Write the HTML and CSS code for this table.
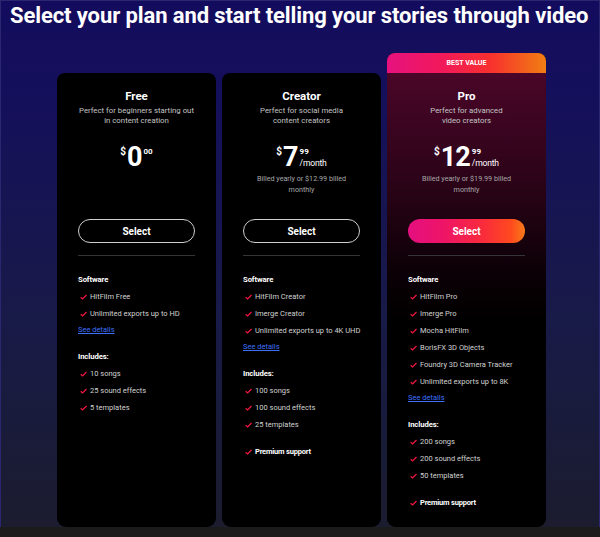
FILE: index.html
```html
<!DOCTYPE html>
<html>
<head>
<meta charset="utf-8">
<link rel="stylesheet" href="styles.css">
</head>
<body>
<div class="page">
  <section class="hero">
    <h1 class="title">Select your plan and start telling your stories through video</h1>
    <div class="plans">
      <div class="card">
        <div class="top">
          <div class="name">Free</div>
          <div class="desc">Perfect for beginners starting out<br>in content creation</div>
          <div class="price">
            <span class="cur">$</span><span class="big">0</span><span class="side"><span class="cents">00</span></span>
          </div>
        </div>
        <button class="btn">Select</button>
        <div class="divider"></div>
        <div class="feats">
          <div class="fh">Software</div>
          <div class="item"><svg class="chk" viewBox="0 0 8 6"><path d="M0.8 3.2 L3 5.2 L7.4 0.8"/></svg>HitFilm Free</div>
          <div class="item"><svg class="chk" viewBox="0 0 8 6"><path d="M0.8 3.2 L3 5.2 L7.4 0.8"/></svg>Unlimited exports up to HD</div>
          <a class="see" href="#">See details</a>
          <div class="fh gap">Includes:</div>
          <div class="item"><svg class="chk" viewBox="0 0 8 6"><path d="M0.8 3.2 L3 5.2 L7.4 0.8"/></svg>10 songs</div>
          <div class="item"><svg class="chk" viewBox="0 0 8 6"><path d="M0.8 3.2 L3 5.2 L7.4 0.8"/></svg>25 sound effects</div>
          <div class="item"><svg class="chk" viewBox="0 0 8 6"><path d="M0.8 3.2 L3 5.2 L7.4 0.8"/></svg>5 templates</div>
        </div>
      </div>

      <div class="card">
        <div class="top">
          <div class="name">Creator</div>
          <div class="desc">Perfect for social media<br>content creators</div>
          <div class="price">
            <span class="cur">$</span><span class="big">7</span><span class="side"><span class="cents">99</span><span class="per">/month</span></span>
          </div>
          <div class="billed">Billed yearly or $12.99 billed<br>monthly</div>
        </div>
        <button class="btn">Select</button>
        <div class="divider"></div>
        <div class="feats">
          <div class="fh">Software</div>
          <div class="item"><svg class="chk" viewBox="0 0 8 6"><path d="M0.8 3.2 L3 5.2 L7.4 0.8"/></svg>HitFilm Creator</div>
          <div class="item"><svg class="chk" viewBox="0 0 8 6"><path d="M0.8 3.2 L3 5.2 L7.4 0.8"/></svg>Imerge Creator</div>
          <div class="item"><svg class="chk" viewBox="0 0 8 6"><path d="M0.8 3.2 L3 5.2 L7.4 0.8"/></svg>Unlimited exports up to 4K UHD</div>
          <a class="see" href="#">See details</a>
          <div class="fh gap">Includes:</div>
          <div class="item"><svg class="chk" viewBox="0 0 8 6"><path d="M0.8 3.2 L3 5.2 L7.4 0.8"/></svg>100 songs</div>
          <div class="item"><svg class="chk" viewBox="0 0 8 6"><path d="M0.8 3.2 L3 5.2 L7.4 0.8"/></svg>100 sound effects</div>
          <div class="item"><svg class="chk" viewBox="0 0 8 6"><path d="M0.8 3.2 L3 5.2 L7.4 0.8"/></svg>25 templates</div>
          <div class="item strong gap"><svg class="chk" viewBox="0 0 8 6"><path d="M0.8 3.2 L3 5.2 L7.4 0.8"/></svg>Premium support</div>
        </div>
      </div>

      <div class="card pro">
        <div class="badge">BEST VALUE</div>
        <div class="pro-body">
          <div class="top">
            <div class="name">Pro</div>
            <div class="desc">Perfect for advanced<br>video creators</div>
            <div class="price">
              <span class="cur">$</span><span class="big">12</span><span class="side"><span class="cents">99</span><span class="per">/month</span></span>
            </div>
            <div class="billed">Billed yearly or $19.99 billed<br>monthly</div>
          </div>
          <button class="btn btn-grad">Select</button>
          <div class="divider"></div>
          <div class="feats">
            <div class="fh">Software</div>
            <div class="item"><svg class="chk" viewBox="0 0 8 6"><path d="M0.8 3.2 L3 5.2 L7.4 0.8"/></svg>HitFilm Pro</div>
            <div class="item"><svg class="chk" viewBox="0 0 8 6"><path d="M0.8 3.2 L3 5.2 L7.4 0.8"/></svg>Imerge Pro</div>
            <div class="item"><svg class="chk" viewBox="0 0 8 6"><path d="M0.8 3.2 L3 5.2 L7.4 0.8"/></svg>Mocha HitFilm</div>
            <div class="item"><svg class="chk" viewBox="0 0 8 6"><path d="M0.8 3.2 L3 5.2 L7.4 0.8"/></svg>BorisFX 3D Objects</div>
            <div class="item"><svg class="chk" viewBox="0 0 8 6"><path d="M0.8 3.2 L3 5.2 L7.4 0.8"/></svg>Foundry 3D Camera Tracker</div>
            <div class="item"><svg class="chk" viewBox="0 0 8 6"><path d="M0.8 3.2 L3 5.2 L7.4 0.8"/></svg>Unlimited exports up to 8K</div>
            <a class="see" href="#">See details</a>
            <div class="fh gap">Includes:</div>
            <div class="item"><svg class="chk" viewBox="0 0 8 6"><path d="M0.8 3.2 L3 5.2 L7.4 0.8"/></svg>200 songs</div>
            <div class="item"><svg class="chk" viewBox="0 0 8 6"><path d="M0.8 3.2 L3 5.2 L7.4 0.8"/></svg>200 sound effects</div>
            <div class="item"><svg class="chk" viewBox="0 0 8 6"><path d="M0.8 3.2 L3 5.2 L7.4 0.8"/></svg>50 templates</div>
            <div class="item strong gap"><svg class="chk" viewBox="0 0 8 6"><path d="M0.8 3.2 L3 5.2 L7.4 0.8"/></svg>Premium support</div>
          </div>
        </div>
      </div>
    </div>
  </section>
  <div class="foot"></div>
</div>
</body>
</html>
```

FILE: styles.css
```css
* { box-sizing: border-box; }
html, body { margin: 0; padding: 0; }
body {
  font-family: Roboto, "Liberation Sans", Arial, sans-serif;
  background: #1b1b1b;
  color: #fff;
}
.page {
  width: 600px;
  height: 537px;
  display: flex;
  flex-direction: column;
  overflow: hidden;
}
.hero {
  height: 527px;
  background: linear-gradient(180deg, #130c5e 0%, #15105a 20%, #181a48 60%, #1b1c2e 100%);
  border-left: 1px solid #2a2670;
  border-top: 1px solid #2a2670;
  border-right: 1px solid #2a2670;
  display: flex;
  flex-direction: column;
}
.title {
  margin: 0;
  padding: 3px 0 0 9px;
  font-size: 22px;
  line-height: 24px;
  font-weight: bold;
  letter-spacing: -0.1px;
  color: #fff;
  white-space: nowrap;
}
.plans {
  flex: 1;
  display: flex;
  gap: 6px;
  padding-left: 56px;
  margin-top: 25px;
}
.card {
  width: 159px;
  margin-top: 20px;
  background: #000;
  border-radius: 8px 8px 9px 9px;
  padding: 0 21px;
  display: flex;
  flex-direction: column;
}
.card.pro {
  margin-top: 0;
  padding: 0;
  background: #000;
  overflow: hidden;
}
.badge {
  height: 20px;
  line-height: 20px;
  text-align: center;
  font-size: 7px;
  font-weight: bold;
  color: #fff;
  background: linear-gradient(90deg, #e6117f 0%, #f2195a 35%, #f8302e 65%, #f07e12 100%);
}
.pro-body {
  flex: 1;
  padding: 0 21px;
  display: flex;
  flex-direction: column;
  background: linear-gradient(180deg, #4a0628 0%, #2a0317 25%, #0a0005 45%, #000 55%);
}
.top {
  height: 146px;
  padding-top: 15px;
  text-align: center;
}
.name {
  font-size: 11.5px;
  line-height: 16px;
  font-weight: bold;
  color: #fff;
}
.desc {
  margin-top: 2px;
  font-size: 7.8px;
  line-height: 10px;
  color: #c4c4c4;
  white-space: nowrap;
}
.price {
  margin-top: 19px;
  display: flex;
  justify-content: center;
  align-items: flex-start;
  height: 25px;
}
.cur {
  font-size: 10px;
  line-height: 10px;
  font-weight: bold;
  margin-top: 2px;
  margin-right: 1px;
}
.big {
  font-size: 27px;
  line-height: 25px;
  font-weight: bold;
  letter-spacing: -1px;
}
.side {
  display: flex;
  flex-direction: column;
  align-items: flex-start;
  margin-left: 2px;
}
.cents {
  font-size: 8px;
  line-height: 9px;
  font-weight: bold;
  margin-top: 2px;
}
.per {
  font-size: 8.6px;
  line-height: 10px;
  margin-top: 2px;
  letter-spacing: -0.2px;
}
.billed {
  margin-top: 4px;
  font-size: 7.2px;
  line-height: 10.5px;
  color: #a8a8a8;
  white-space: nowrap;
}
.btn {
  width: 100%;
  height: 24px;
  border-radius: 12px;
  border: 1px solid #cfcfcf;
  background: transparent;
  color: #fff;
  font-family: Roboto, "Liberation Sans", Arial, sans-serif;
  font-size: 10px;
  font-weight: bold;
  padding: 0;
}
.btn-grad {
  border: none;
  background: linear-gradient(90deg, #e40f80 0%, #ee1467 30%, #f92c3b 65%, #ff4a1e 88%, #f77a18 100%);
}
.divider {
  margin-top: 12px;
  height: 1px;
  background: #353535;
}
.feats {
  margin-top: 16px;
  display: flex;
  flex-direction: column;
  align-items: flex-start;
}
.fh {
  font-size: 7.7px;
  line-height: 16px;
  font-weight: bold;
  color: #fff;
  letter-spacing: -0.1px;
}
.fh.gap { margin-top: 11px; }
.item {
  display: flex;
  align-items: center;
  font-size: 7.5px;
  line-height: 17px;
  color: #d2d2d2;
  white-space: nowrap;
}
.item.strong { color: #fff; font-weight: bold; letter-spacing: -0.2px; }
.item.gap { margin-top: 10px; }
.chk {
  width: 7px;
  height: 6px;
  margin-left: 2px;
  margin-right: 3px;
  flex-shrink: 0;
}
.chk path {
  fill: none;
  stroke: #f0173f;
  stroke-width: 1.5;
}
.see {
  font-size: 7.5px;
  line-height: 16px;
  color: #3d6ef5;
  text-decoration: underline;
}
.foot {
  height: 10px;
  background: #1b1b1b;
}
```
